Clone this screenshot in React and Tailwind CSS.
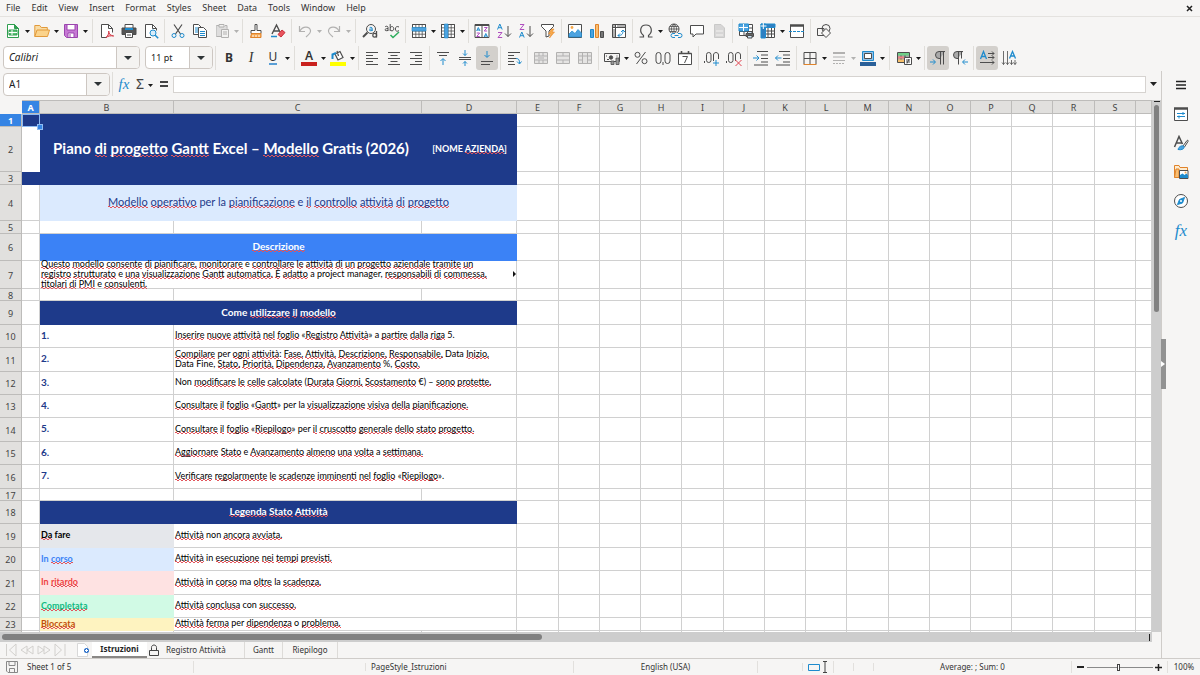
import React from "react";

const G = "#4d4d4d";
const B = "#1e8bcd";

function Svg({ children, w = 16, vb = "0 0 16 16", faded }) {
  return (
    <svg
      width={w}
      height="16"
      viewBox={vb}
      fill="none"
      stroke={G}
      strokeWidth="1"
      className={faded ? "opacity-40" : ""}
      aria-hidden="true"
    >
      {children}
    </svg>
  );
}

const grid = "M1.5 1.5h13v13h-13zM1.5 4.8h13M1.5 8h13M1.5 11.2h13M4.8 1.5v13M8 1.5v13M11.2 1.5v13";

const icons = {
  new: (
    <Svg>
      <path d="M2.5 1.5h7l4 4v9h-11z" stroke="#2f9e4f" fill="#fff" />
      <path d="M9.5 1.5v4h4z" fill="#2f9e4f" stroke="#2f9e4f" />
      <path d="M4 7h8v5H4z" fill="#5bbf74" stroke="#2f9e4f" />
      <path d="M4 9.5h8M7 7v5" stroke="#fff" />
    </Svg>
  ),
  open: (
    <Svg>
      <path d="M.8 13.5V2.5h5l1.5 2h6v2.5" fill="#f9dca4" stroke="#e29a3b" />
      <path d="M.8 13.5 3 7h12.5l-2 6.5z" fill="#fbd38b" stroke="#e29a3b" />
    </Svg>
  ),
  save: (
    <Svg>
      <path d="M1.5 1.5h13v13h-11l-2-2z" fill="#c678d4" stroke="#9b45ae" />
      <path d="M4 1.5h8v5.5H4zM5 10h6v4.5H5z" fill="#fff" stroke="#9b45ae" />
      <path d="M7 11v3" stroke="#9b45ae" />
    </Svg>
  ),
  pdf: (
    <Svg>
      <path d="M8 14.500H2.500V1.500h7l4 4v4" fill="#fff" />
      <path d="M9.500 1.500v4h4" />
      <path d="M7 14.500c2-2 3-4 2.700-6.500 0 3 2 4.500 5 5-3-.5-5.500 0-7.700 1.500z" stroke="#d4404c" fill="#f4a3aa" />
    </Svg>
  ),
  print: (
    <Svg>
      <path d="M4 5V1.500h8V5" fill="#fff" />
      <path d="M1 5h14v6.500H1z" fill="#555" />
      <path d="M4 6h8" stroke={B} strokeWidth="2" />
      <path d="M4.500 9.500h7v5h-7z" fill="#fff" />
      <path d="M6 12h4" />
    </Svg>
  ),
  preview: (
    <Svg>
      <path d="M8 14.500H2.500V1.500h7l4 4v2" fill="#fff" />
      <path d="M9.500 1.500v4h4" />
      <circle cx="10" cy="10" r="3" fill="#d7ecfa" stroke={B} />
      <path d="m12.200 12.200 3 3" stroke={B} strokeWidth="1.500" />
    </Svg>
  ),
  cut: (
    <Svg>
      <path d="M4 1.500 10.500 11M12 1.500 5.500 11" strokeWidth="1.200" />
      <circle cx="4" cy="12.500" r="2" stroke={B} />
      <circle cx="12" cy="12.500" r="2" stroke={B} />
    </Svg>
  ),
  copy: (
    <Svg>
      <path d="M1.500 1.500h5l2.500 2.500v7.500H1.500z" fill="#fff" />
      <path d="M3 5h3.500M3 7h3.500M3 9h3" stroke={B} />
      <path d="M6.500 4.500h5L14.500 7.500v7h-8z" fill="#fff" />
      <path d="M8 8.500h5M8 10.500h5M8 12.500h5" stroke={B} />
    </Svg>
  ),
  paste: (
    <Svg faded>
      <path d="M5 2.500H2.500v11H7M11 2.500h2V6" fill="#ccc" />
      <path d="M2.500 3H12v10H2.500z" fill="#bbb" stroke="none" />
      <path d="M5 1.500h5v2.500H5zM7.500 6.500h7v8h-7z" fill="#eee" />
      <path d="M9 9h4M9 11h4" />
    </Svg>
  ),
  brush: (
    <Svg>
      <path d="M7 1.500h2v6h4v3H3v-3h4z" fill="#fff" />
      <path d="M3.500 10.500h9.500v4H2.500z" fill="#f5a956" stroke="#e0832a" />
      <path d="M5 14v-2M8 14v-2M11 14v-2" stroke="#fff" />
    </Svg>
  ),
  clear: (
    <Svg>
      <path d="M2 11 6.500 2 10 9M3.500 8h6" strokeWidth="1.400" />
      <path d="M1 13.500h6" stroke={B} strokeWidth="1.500" />
      <path d="m8 11.500 4-4.500 3 2.500-4 4.500z" fill="#e9545d" stroke="#c9303b" />
    </Svg>
  ),
  undo: (
    <Svg faded>
      <path d="M2.500 3v5.500H8M3 8C5.500 3 12.500 3 13.500 7.500c.5 2.500-2 4.500-4.500 6.500" strokeWidth="1.200" />
    </Svg>
  ),
  redo: (
    <Svg faded>
      <path d="M13.500 3v5.500H8M13 8C10.500 3 3.500 3 2.500 7.500 2 10 4.500 12 7 14" strokeWidth="1.200" />
    </Svg>
  ),
  find: (
    <Svg>
      <circle cx="9" cy="6" r="4.500" />
      <path d="M5.500 9.500 1 14" strokeWidth="2" />
      <path d="M7.500 5c.5-1 2.700-1 2.700.5V8M10.200 6c-3.700-.3-3.700 2.500 0 1.500" stroke={B} />
      <path d="M14.500 8v6.500" strokeWidth="1.300" />
      <circle cx="12.700" cy="12.300" r="1.900" strokeWidth="1.200" />
    </Svg>
  ),
  spell: (
    <Svg>
      <path d="M1 4c.5-1 3-1.200 3 .4V8M4 5.500c-4 0-4 3 0 2M6.200 1v7M6.200 5c1-2.500 4-1.500 3.500 1.200-.3 2-2.700 2.300-3.500.6M15 4c-1.500-1-3.700-.3-3.700 2S13.500 8.800 15 7.600" />
      <path d="m6.500 12 2.500 2.500L15 9" stroke="#2fae5e" strokeWidth="1.500" />
    </Svg>
  ),
  row: (
    <Svg>
      <path d="M1.500 1.500h13v13h-13z" fill="#fff" />
      <path d={grid} strokeWidth=".8" />
      <path d="M1 4.500h14v3.500H1z" fill="#4da3e0" stroke={B} strokeWidth=".6" />
    </Svg>
  ),
  col: (
    <Svg>
      <path d="M1.500 1.500h13v13h-13z" fill="#fff" />
      <path d={grid} strokeWidth=".8" />
      <path d="M4.500 1h3.500v14H4.500z" fill="#4da3e0" stroke={B} strokeWidth=".6" />
    </Svg>
  ),
  sort: (
    <Svg>
      <path d="M1 1.500h14v13H1zM8 3v11.500" fill="#fff" />
      <path d="M1 2h14" strokeWidth="2" />
      <path d="m2.700 8 1.600-3.500L6 8M3.200 7h2.200M10.200 14l1.600-3.500 1.700 3.500M10.700 13h2.200" stroke={B} />
      <path d="M2.700 10h3l-3 3.500h3M10.200 4.500h3l-3 3.500h3" stroke="#b04fc0" />
    </Svg>
  ),
  az: (
    <Svg>
      <path d="M1.500 6.500 3.800 1l2.400 5.500M2.300 4.700h3" stroke={B} />
      <path d="M2 9.500h4l-4 5h4.200" stroke="#b04fc0" />
      <path d="M12 3v10.500M9 10.500l3 3 3-3" />
    </Svg>
  ),
  za: (
    <Svg>
      <path d="M2 1.500h4l-4 5h4.200" stroke="#b04fc0" />
      <path d="M1.500 14.500 3.800 9l2.400 5.500M2.300 12.700h3" stroke={B} />
      <path d="M12 3v10.500M9 10.500l3 3 3-3" />
    </Svg>
  ),
  filter: (
    <Svg>
      <path d="M1.500 1.500h12v2L9 8v5l-3 1V8L1.500 3.500z" fill="#fff" />
      <path d="M11.500 6 8.500 11h2.500l-1.500 4L14.500 9h-2.500l2-3z" fill="#f7a94b" stroke="#e8892b" strokeWidth=".6" />
    </Svg>
  ),
  image: (
    <Svg>
      <path d="M1.500 1.500h13v13h-13z" fill="#fff" />
      <path d="m2 14 0-3 3-3 3 2.500L11 6.500l3.500 3.500v4z" fill="#4da3e0" stroke={B} strokeWidth=".7" />
      <circle cx="5" cy="4.500" r="1.400" fill="#f7a94b" stroke="none" />
    </Svg>
  ),
  chart: (
    <Svg>
      <path d="M1.500 6.500h3v8h-3z" fill="#4da3e0" stroke={B} />
      <path d="M6.500 1.500h3v13h-3z" fill="#f9bf74" stroke="#e0832a" />
      <path d="M11.500 8.500h3v6h-3z" fill="#777" />
    </Svg>
  ),
  pivot: (
    <Svg>
      <path d="M1.500 1.500h13v13h-13zM1.500 4.500h13M4.500 1.500v13" fill="#fff" />
      <path d="M2 3h2M6 3h8M3 6v8" strokeWidth="1.500" stroke="#999" />
      <path d="M7 12.500c4 0 5-1.500 5-5M9 10.500l-2 2 2 2M10 9l2-2 2 2" stroke={B} />
    </Svg>
  ),
  omega: (
    <Svg>
      <path d="M1.500 14h4v-1.500C1 9 2 2 8 2s7 7 2.500 10.500V14h4" strokeWidth="1.200" />
    </Svg>
  ),
  link: (
    <Svg>
      <circle cx="7" cy="6" r="5" />
      <path d="M2 6h10M7 1v10M3 3.500h8M3 8.500h6M7 1C3.500 4 3.500 8 7 11M7 1c3.500 3 3.500 7 0 10" strokeWidth=".8" />
      <path d="M3 10h13v5.500H3z" fill="#f6f5f4" stroke="none" />
      <path d="M8 14.500H6a2 2 0 0 1 0-4h2M11 10.500h2a2 2 0 0 1 0 4h-2M7.500 12.500h4" stroke={B} />
    </Svg>
  ),
  comment: (
    <Svg>
      <path d="M1.500 2.500h13v8.500H7l-3 3V11H1.500z" fill="#fff" />
    </Svg>
  ),
  header: (
    <Svg faded>
      <path d="M3.500 1.500h6.500l3.500 3.500v9.500h-10z" fill="#aaa" stroke="#888" />
      <path d="M5 8h7M5 12h7" stroke="#eee" />
    </Svg>
  ),
  area: (
    <Svg>
      <path d="M1.500 1.500h13v11h-13zM1.500 5h13M1.500 8.500h13M6 1.500v11M10 1.500v11" fill="#fff" />
      <path d="M1 1h9.500v7H1z" fill="#4da3e0" stroke={B} />
      <path d="M1 4.500h9M5.500 1v7" stroke="#fff" />
      <path d="M8 10.500h7.500v3H8z" fill="#666" />
      <path d="M9.500 8.500h4.500v2H9.500zM9.500 12.500h4.500v2.500H9.500z" fill="#cfe6f7" />
    </Svg>
  ),
  freeze: (
    <Svg>
      <path d="M1.500 1.500h13v13h-13zM1.500 8h13M1.500 11h13M8 1.500v13M11.500 1.500v13" fill="#fff" />
      <path d="M1 1h4.500v14H1zM1 1h14v3.500H1z" fill="#2f7fc1" stroke={B} />
      <path d="M3.300 0v6M.5 3h6" stroke="#fff" />
    </Svg>
  ),
  split: (
    <Svg>
      <path d="M1.500 2v12.500h13V2" fill="#fff" />
      <path d="M1 2.500h14" strokeWidth="2.500" />
      <path d="M0 8.500h16" stroke={B} strokeDasharray="3 1" />
    </Svg>
  ),
  shapes: (
    <Svg>
      <path d="M1.500 5.500h6.500v7H1.500z" fill="#f6f5f4" />
      <circle cx="10" cy="5.500" r="4" />
      <path d="m10 5.500 4.500 4.500L10 14.500 5.500 10z" fill="#f6f5f4" />
    </Svg>
  ),
  fill: (
    <Svg>
      <path d="m5 4 5-2.500 3 6-5 2.500zM7 1l1.500 5" fill="#fff" strokeWidth="1.200" />
      <path d="M2.500 9V4.500L6 3" stroke={B} strokeWidth="2" />
      <path d="M0 12h16v4H0z" fill="#ffff00" stroke="none" />
    </Svg>
  ),
  left: <Svg><path d="M2 2.500h12M2 5.500h7M2 8.500h12M2 11.500h7M2 14.500h12" /></Svg>,
  center: <Svg><path d="M2 2.500h12M4.500 5.500h7M2 8.500h12M4.500 11.500h7M2 14.500h12" /></Svg>,
  right: <Svg><path d="M2 2.500h12M7 5.500h7M2 8.500h12M7 11.500h7M2 14.500h12" /></Svg>,
  top: (
    <Svg>
      <path d="M2 2.500h12M4 5.500h8" />
      <path d="M8 15V9M5.500 11 8 8.500l2.500 2.500" stroke={B} />
    </Svg>
  ),
  middle: (
    <Svg>
      <path d="M2 7.500h12M2 9.500h12" />
      <path d="M8 0v5.500M6 3.500l2 2 2-2M8 16v-4.500M6 13.500l2-2 2 2" stroke={B} />
    </Svg>
  ),
  bottom: (
    <Svg>
      <path d="M2 11.500h12M2 14.500h9" />
      <path d="M8 1v6M5.500 5 8 7.500 10.500 5" stroke={B} />
    </Svg>
  ),
  wrap: (
    <Svg>
      <path d="M2 2.500h12M2 5.500h6M2 8.500h8M2 11.500h6M2 14.500h7" />
      <path d="M10 8.500c3 0 3.500 1.500 3.500 5M11 11.500l2.500 2.500 2-2.500" stroke={B} />
    </Svg>
  ),
  merge1: (
    <Svg faded>
      <path d="M1.500 2.500h13v11h-13zM1.500 6h13M1.500 10h13M6 2.500V6M10 2.500V6M6 10v3.500M10 10v3.500M5 8h6" fill="#ccc" />
    </Svg>
  ),
  merge2: (
    <Svg faded>
      <path d="M1.500 2.500h13v11h-13zM1.500 6h13M1.500 10h13M8 2.500V6M8 10v3.500" fill="#ccc" />
    </Svg>
  ),
  merge3: (
    <Svg faded>
      <path d="M1.500 2.500h13v11h-13zM1.500 6h13M5.500 2.500v11M10.500 2.500v11M1.500 10H5M11 10h3.500" fill="#ccc" />
    </Svg>
  ),
  currency: (
    <Svg>
      <path d="M.5 3.500h15v8H.5z" />
      <circle cx="7" cy="7.500" r="1.700" fill={G} />
      <path d="M2.500 5.500v1M13 5.500v1M3 9.500h2" />
      <path d="M7 11h3v3.500H7zM12 8h3v6.500h-3z" fill="#999" strokeWidth=".8" />
    </Svg>
  ),
  percent: (
    <Svg>
      <circle cx="4.500" cy="4.800" r="2.500" />
      <circle cx="11.500" cy="11.200" r="2.500" />
      <path d="M12.500 2 3.500 14" />
    </Svg>
  ),
  number: (
    <Svg>
      <rect x="1" y="2.500" width="5" height="11" rx="2.500" />
      <rect x="10" y="2.500" width="5" height="11" rx="2.500" />
      <path d="M8 12v3" />
    </Svg>
  ),
  date: (
    <Svg>
      <path d="M1.500 3.500h13v11h-13z" fill="#fff" />
      <path d="M1.500 3.500h13M4.500 1v3M11.500 1v3" strokeWidth="1.600" />
      <path d="M5.500 6.500h5l-3 6.500" />
    </Svg>
  ),
  addDec: (
    <Svg>
      <rect x="2.500" y="2.500" width="4.500" height="10" rx="2.200" />
      <path d="M9.500 11V5c0-3.300 5-3.300 5 0v4M.5 11v2" />
      <path d="M12 10v6M9 13h6" stroke={B} />
    </Svg>
  ),
  delDec: (
    <Svg>
      <rect x="2.500" y="2.500" width="4.500" height="10" rx="2.200" />
      <path d="M9.500 11V5c0-3.300 5-3.300 5 0v4M.5 11v2" />
      <path d="m9.500 10 6 6M15.500 10l-6 6" stroke="#e0434f" />
    </Svg>
  ),
  indent: (
    <Svg>
      <path d="M4 1.500h11M8 5h7M8 8.500h7M8 12h7M1 15h14" />
      <path d="M0 8h6M3.500 5.500 6 8l-2.500 2.500" stroke={B} />
    </Svg>
  ),
  outdent: (
    <Svg>
      <path d="M4 1.500h11M8 5h7M8 8.500h7M8 12h7M1 15h14" />
      <path d="M.5 8h6M3 5.500.5 8 3 10.500" stroke={B} />
    </Svg>
  ),
  borders: (
    <Svg>
      <path d="M2 14V2.500h12V14M8 2.500V14M2 8.500h12" />
      <path d="M1.500 14.500h13" stroke="#e0832a" />
    </Svg>
  ),
  lines: (
    <Svg faded>
      <path d="M2 3h12" strokeWidth="2" />
      <path d="M2 7h12M2 10.500h12" />
      <path d="M2 13.500h12" strokeDasharray="2 1" />
    </Svg>
  ),
  bcolor: (
    <Svg>
      <path d="M2.500 1.500h11v9h-11z" fill="#8fc0ea" stroke={B} />
      <path d="M4.500 3.500h7v5h-7z" fill="#fff" />
      <path d="M0 12h16v4H0z" fill="#2a6099" stroke="none" />
    </Svg>
  ),
  cond: (
    <Svg>
      <path d="M1.500 2.500h12v10h-12zM5 2.500v10M9 2.500v10M1.500 6h12M1.500 9h12" fill="#fff" />
      <path d="M2 3h11v2.500H2z" fill="#6fcf87" stroke="none" />
      <path d="M2 6.500h6V8.500H2z" fill="#f08080" stroke="none" />
      <path d="M2 9.500h6V12H2z" fill="#f7c06b" stroke="none" />
      <path d="M8.500 7.500h7v7h-7z" fill="#fff" />
      <path d="M10 10h4M10 12h4M13 9l-2 4.500" />
    </Svg>
  ),
  ltr: (
    <Svg>
      <path d="M15 1.500H9a3.500 3.500 0 0 0 0 7h1" fill="#aaa" />
      <path d="M10.500 1.500v13M13.500 1.500v13" />
      <path d="M0 12h5M3 9.500 5.500 12 3 14.500" stroke={B} />
    </Svg>
  ),
  rtl: (
    <Svg>
      <path d="M11 1.500H5a3.500 3.500 0 0 0 0 7h1" fill="#aaa" />
      <path d="M6.500 1.500v13M9.500 1.500v7" />
      <path d="M16 12h-5M13 9.500 10.500 12l2.500 2.500" stroke={B} />
    </Svg>
  ),
  tdlr: (
    <Svg>
      <path d="M1.500 9 4.500 1.500 7.500 9M2.500 6.500h4" stroke={B} strokeWidth="1.300" />
      <path d="M9 3.500h6M9 7.500h6M1 12.500h14M13 1.500l2 2-2 2M13 5.500l2 2-2 2M13 10.500l2 2-2 2" />
    </Svg>
  ),
  tdtb: (
    <Svg>
      <path d="M8.500 8.500 11.500 1.500l3 7M9.500 6h4" stroke={B} strokeWidth="1.300" />
      <path d="M2.500 1v13.500M6.500 1v13.500M10.500 10v4.500M14 10v4.500M1 12.500l1.500 2 1.500-2M5 12.500l1.500 2 1.500-2M9 12.500l1.500 2 1.500-2M12.500 12.500l1.500 2 1.500-2" strokeWidth=".8" />
    </Svg>
  ),
  menu: <Svg><path d="M3 4.500h10M3 8h10M3 11.500h10" stroke="#222" strokeWidth="1.500" /></Svg>,
  props: (
    <Svg>
      <path d="M1.500 2v12.500h13V2" fill="#fff" />
      <path d="M1 2.500h14" strokeWidth="2.500" />
      <path d="M4 7.500h8M4 10.500h8M10 6v3M6 9.500v3" stroke={B} />
    </Svg>
  ),
  styles: (
    <Svg>
      <path d="M1.500 12 6 1.500 9.500 9M3 8h6" strokeWidth="1.500" />
      <path d="m10 11 4-5.500c1-.5 1.500 0 1 1L11.500 12" />
      <path d="M5 14.500c1-3.500 4-4 5.500-3.500 2 2-1 4.500-5.500 3.500z" fill="#4da3e0" stroke={B} />
    </Svg>
  ),
  gallery: (
    <Svg>
      <path d="M1.500 13.500v-12h4.500l1 2h7.500v3" fill="#fdebcf" stroke="#e0832a" />
      <path d="M1.500 13.500 3 5h3v8.500z" fill="#f9bf74" stroke="#e0832a" />
      <path d="M6.500 6.500h8.500v8H6.500z" fill="#fff" />
      <path d="m7 14 0-3 2.500-1.500 2 1.500 2-1.500 1.500 2v2.500z" fill={B} stroke="none" />
      <circle cx="12.500" cy="8.500" r="1" fill="#f7a94b" stroke="none" />
    </Svg>
  ),
  navigator: (
    <Svg>
      <circle cx="8" cy="8" r="6.500" fill="#fff" />
      <path d="m11.500 4.500-2 5.500-5 1.500 2-5z" fill={B} stroke={B} />
      <circle cx="8" cy="8" r="1" fill="#fff" stroke="none" />
    </Svg>
  ),
};

function Caret({ faded }) {
  return (
    <svg width="5" height="3" viewBox="0 0 5 3" className={faded ? "opacity-30" : ""} aria-hidden="true">
      <path d="M0 0h5L2.500 3z" fill="#1a1a1a" />
    </svg>
  );
}

function Tool({ name, label, pressed, children }) {
  return (
    <button
      type="button"
      aria-label={label || name}
      aria-pressed={pressed}
      className={
        "flex h-6 w-[22px] shrink-0 items-center justify-center rounded-[3px] " +
        (pressed ? "bg-[#d3d0cc]" : "")
      }
    >
      {children || icons[name]}
    </button>
  );
}

function Drop({ label, faded }) {
  return (
    <button type="button" aria-label={label + " options"} className="flex h-6 w-[7px] shrink-0 items-center justify-center pt-0.5">
      <Caret faded={faded} />
    </button>
  );
}

function Sep({ wide }) {
  return (
    <div className={"flex h-6 shrink-0 justify-center " + (wide ? "w-[7px]" : "w-[5px]")}>
      <div className="h-full w-px bg-[#e0deda]" />
    </div>
  );
}

/* "name+" adds a drop-down arrow, "name*" marks a pressed toggle, "name-" adds a faded arrow */
function Tools({ items }) {
  return items.map((item, i) => {
    if (item === "|") return <Sep key={i} />;
    if (item === "||") return <Sep key={i} wide />;
    const name = item.replace(/[+*-]/, "");
    return (
      <React.Fragment key={i}>
        <Tool name={name} pressed={item.endsWith("*") || undefined} />
        {item.endsWith("+") && <Drop label={name} />}
        {item.endsWith("-") && <Drop label={name} faded />}
      </React.Fragment>
    );
  });
}

function Combo({ label, value, width, textClass }) {
  return (
    <div className={"flex h-[23px] shrink-0 overflow-hidden rounded-[4px] border border-[#cdc7c2] bg-white " + width}>
      <input aria-label={label} defaultValue={value} className={"min-w-0 flex-1 px-[5px] text-[#222] outline-none " + textClass} />
      <button type="button" aria-label={label + " list"} className="flex w-[23px] items-center justify-center border-l border-[#cdc7c2] bg-[#f4f3f1]">
        <svg width="8" height="4" viewBox="0 0 8 4" aria-hidden="true"><path d="M0 0h8L4 4z" fill="#2e3436" /></svg>
      </button>
    </div>
  );
}

/* Words inside braces are the ones the spell checker does not know. */
function Spell({ text }) {
  return text.split(/(\{[^}]*\})/).map((part, i) => {
    if (!part.startsWith("{")) return part;
    return part.slice(1, -1).split(" ").map((word, j) => (
      <React.Fragment key={i + "-" + j}>
        {j > 0 && " "}
        <span className="bg-[linear-gradient(90deg,#e2555c_50%,transparent_50%),linear-gradient(90deg,transparent_50%,#e2555c_50%)] bg-[size:4px_1px] bg-[position:0_calc(100%_-_1px),0_100%] bg-repeat-x">{word}</span>
      </React.Fragment>
    ));
  });
}

const columns = [
  ["A", "w-[18px]"], ["B", "w-[134px]"], ["C", "w-[248px]"], ["D", "w-[95px]"],
  ["E", "w-[42px]"], ["F", "w-[41px]"], ["G", "w-[41px]"], ["H", "w-[41px]"],
  ["I", "w-[42px]"], ["J", "w-[41px]"], ["K", "w-[41px]"], ["L", "w-[41px]"],
  ["M", "w-[42px]"], ["N", "w-[41px]"], ["O", "w-[41px]"], ["P", "w-[41px]"],
  ["Q", "w-[41px]"], ["R", "w-[42px]"], ["S", "w-[41px]"], ["", ""],
];

const line = "border-r border-b border-[#d0d0d0] ";
const navy = "bg-[#1e3a8a] text-white ";

const step = (h, n, text) => ({
  h,
  cells: [
    { c: line },
    { c: line + "pl-px text-[10px] font-bold text-[#1e3a8a]", t: n },
    { c: line + "pl-px", span: 2, t: text },
  ],
});
const state = (h, name, look, text) => ({
  h,
  cells: [
    { c: line },
    { c: "pl-px font-bold " + look, t: name },
    { c: line + "pl-px", span: 2, t: text },
  ],
});
const empty = (h) => ({ h, cells: [{ c: line }, { c: line }, { c: line }, { c: line }] });

const rows = [
  { h: "h-[13px]", cells: [{ c: "relative bg-[#1e3a8a]", selected: true }, { c: navy, span: 3 }] },
  {
    h: "h-[45px]",
    cells: [
      { c: "bg-white" },
      { c: navy + "text-center text-[15px] font-bold", span: 2, t: "Piano {di progetto Gantt} Excel – {Modello} Gratis (2026)" },
      { c: navy + "text-center text-[9px] font-bold", t: "[NOME {AZIENDA}]" },
    ],
  },
  { h: "h-[13px]", cells: [{ c: navy }, { c: navy, span: 3 }] },
  {
    h: "h-[36px]",
    cells: [
      { c: line },
      { c: "bg-[#dbeafe] text-center text-[11px] text-[#1e3a8a]", span: 3, t: "{Modello operativo} per la {pianificazione} e {il controllo attività di progetto}" },
    ],
  },
  empty("h-[13px]"),
  { h: "h-[27px]", cells: [{ c: line }, { c: "bg-[#3b82f6] text-center text-[10px] font-bold text-white", span: 3, t: "{Descrizione}" }] },
  {
    h: "h-[28px]",
    cells: [
      { c: line },
      {
        c: line + "relative pl-px",
        span: 3,
        spill: true,
        lines: [
          "{Questo modello consente di pianificare, monitorare} e {controllare le attività di un progetto aziendale tramite un}",
          "{registro strutturato} e {una visualizzazione Gantt automatica.} {È adatto} a project manager, {responsabili di commessa,}",
          "{titolari di PMI} e {consulenti.}",
        ],
      },
    ],
  },
  empty("h-[12px]"),
  { h: "h-[24px]", cells: [{ c: line }, { c: navy + "text-center text-[10px] font-bold", span: 3, t: "Come {utilizzare il modello}" }] },
  step("h-[23px]", "1.", "{Inserire nuove attività nel foglio} «{Registro Attività}» a {partire dalla riga} 5."),
  {
    h: "h-[24px]",
    cells: [
      { c: line },
      { c: line + "pl-px text-[10px] font-bold text-[#1e3a8a]", t: "2." },
      {
        c: line + "pl-px",
        span: 2,
        lines: [
          "{Compilare} per {ogni attività}: {Fase, Attività, Descrizione, Responsabile,} Data {Inizio,}",
          "Data Fine, {Stato, Priorità, Dipendenza, Avanzamento} %, {Costo.}",
        ],
      },
    ],
  },
  step("h-[23px]", "3.", "Non {modificare le celle calcolate} ({Durata Giorni, Scostamento} €) – {sono protette.}"),
  step("h-[23px]", "4.", "{Consultare il foglio} «{Gantt}» per la {visualizzazione visiva della pianificazione.}"),
  step("h-[24px]", "5.", "{Consultare il foglio} «{Riepilogo}» per {il cruscotto generale dello stato progetto.}"),
  step("h-[23px]", "6.", "{Aggiornare Stato} e {Avanzamento almeno una volta} a {settimana.}"),
  step("h-[24px]", "7.", "{Verificare regolarmente le scadenze imminenti nel foglio} «{Riepilogo}»."),
  empty("h-[12px]"),
  { h: "h-[23px]", cells: [{ c: line }, { c: navy + "text-center text-[10px] font-bold", span: 3, t: "{Legenda Stato Attività}" }] },
  state("h-[24px]", "{Da} fare", "bg-[#e5e7eb] text-black", "{Attività} non {ancora avviata.}"),
  state("h-[23px]", "In {corso}", "bg-[#dbeafe] text-[#3b82f6]", "{Attività} in {esecuzione nei tempi previsti.}"),
  state("h-[24px]", "In {ritardo}", "bg-[#fee2e2] text-[#ef4444]", "{Attività} in {corso} ma {oltre} la {scadenza.}"),
  state("h-[23px]", "{Completata}", "bg-[#d1fae5] text-[#10b981]", "{Attività conclusa} con {successo.}"),
  state("h-[13px]", "{Bloccata}", "bg-[#fef3c0] text-[#c2500a]", "{Attività ferma} per {dipendenza} o {problema.}"),
  empty("h-[13px]"),
];

function Cell({ cell }) {
  return (
    <td colSpan={cell.span} className={"p-0 whitespace-nowrap " + (cell.t ? "pb-[3px] " : "") + cell.c}>
      {cell.t && <Spell text={cell.t} />}
      {cell.lines && (
        <div className="-my-1 pb-px">
          {cell.lines.map((t) => (
            <div key={t} className="leading-[10px]"><Spell text={t} /></div>
          ))}
        </div>
      )}
      {cell.spill && (
        <svg width="4" height="6" viewBox="0 0 4 6" className="absolute top-[10px] -right-px" aria-hidden="true">
          <path d="M0 0v6l3-3z" fill="#111" />
        </svg>
      )}
      {cell.selected && (
        <>
          <div className="absolute inset-0 border border-[#8fbcf3]" />
          <div className="absolute -right-0.5 -bottom-0.5 z-10 h-1 w-1 bg-[#3584e4] outline outline-[#8fbcf3]" />
        </>
      )}
    </td>
  );
}

const headLine = "border-r border-b border-[#bdbcba] ";

function Sheet() {
  return (
    <div className="min-h-0 flex-1 overflow-hidden bg-white">
      <table className="w-full table-fixed border-separate border-spacing-0 font-[Lato,sans-serif] text-[9px] leading-none text-black">
        <colgroup>
          <col className="w-[22px]" />
          {columns.map(([name, width]) => <col key={name} className={width} />)}
        </colgroup>
        <thead className="font-['Noto_Sans',sans-serif] text-[9px] text-[#444]">
          <tr className="h-[14px]">
            <td className="bg-[#f6f5f4] p-0" />
            {columns.map(([name]) => (
              <th
                key={name}
                scope="col"
                className={"overflow-hidden border-t p-0 " + headLine + (name === "A" ? "bg-[#3584e4] font-bold text-white" : "bg-[#e1e0de] font-normal")}
              >
                {name}
              </th>
            ))}
          </tr>
        </thead>
        <tbody>
          {rows.map((row, i) => (
            <tr key={i} className={row.h}>
              <th
                scope="row"
                className={"p-0 pt-px text-center font-['Noto_Sans',sans-serif] text-[9px] " + headLine + (i === 0 ? "bg-[#3584e4] font-bold text-white" : "bg-[#e1e0de] font-normal text-[#444]")}
              >
                {i + 1}
              </th>
              {row.cells.map((cell, j) => <Cell key={j} cell={cell} />)}
              {columns.slice(4).map(([name]) => <td key={name} className={"p-0 " + line} />)}
            </tr>
          ))}
        </tbody>
      </table>
    </div>
  );
}

function SheetTabs() {
  return (
    <div className="flex h-4 shrink-0 items-center bg-[#f6f5f4] text-[8px] text-[#333]">
      <div className="flex w-[75px] shrink-0 pl-[5px]">
        <svg width="62" height="14" viewBox="0 0 62 14" fill="none" stroke="#d2d0cd" aria-hidden="true">
          <path d="M1.500 1v12M11 1 4.500 7l6.500 6zM22 3l-6 4 6 4zM28 3l-6 4 6 4zM33 3l6 4-6 4zM39 3l6 4-6 4zM50 1l6.500 6-6.500 6zM60 1v12" />
        </svg>
      </div>
      <button type="button" aria-label="Add sheet" className="flex h-full w-[17px] shrink-0 items-center justify-center">
        <svg width="13" height="14" viewBox="0 0 13 14" aria-hidden="true">
          <path d="M.5.5h7l3 3v10H.5z" fill="#fff" stroke="#d8d8d8" />
          <circle cx="9.500" cy="7.500" r="2.500" fill="#2a6fc9" />
          <path d="M9.500 6v3M8 7.500h3" stroke="#fff" />
        </svg>
      </button>
      <button type="button" className="h-full w-[55px] shrink-0 border-b-2 border-[#8a8886] bg-white font-bold text-[#222]">Istruzioni</button>
      <button type="button" className="flex h-full w-[98px] shrink-0 items-center gap-[7px] border-r border-[#dddbd8] pl-[2px]">
        <svg width="10" height="12" viewBox="0 0 10 12" fill="none" stroke="#444" aria-hidden="true">
          <path d="M.5 6.500h9v5h-9zM2.500 6.500v-3c0-3.300 5-3.300 5 0v3" />
        </svg>
        Registro Attività
      </button>
      <button type="button" className="h-full w-[38px] shrink-0 border-r border-[#dddbd8]">Gantt</button>
      <button type="button" className="h-full w-[55px] shrink-0 border-r border-[#dddbd8]">Riepilogo</button>
    </div>
  );
}

function StatusBar() {
  return (
    <footer className="flex h-[17px] shrink-0 items-center border-t border-[#cfccc9] bg-[#f6f5f4] text-[8px] text-[#333]">
      <div className="flex w-[194px] shrink-0 items-center gap-[9px] border-r border-[#e2e0dd] pl-[6px]">
        <svg width="12" height="12" viewBox="0 0 12 12" fill="none" stroke="#888" aria-hidden="true">
          <path d="M.5.500h11v11H2l-1.500-1.500zM3 .5h6v4H3zM3.500 7.500h5v4h-5z" />
        </svg>
        Sheet 1 of 5
      </div>
      <div className="w-[172px] shrink-0 border-r border-[#e2e0dd] py-1" />
      <div className="w-[208px] shrink-0 border-r border-[#e2e0dd] pl-[5px]">PageStyle_Istruzioni</div>
      <div className="flex-1 border-r border-[#e2e0dd] text-center">English (USA)</div>
      <div className="w-[45px] shrink-0 border-r border-[#e2e0dd] py-1" />
      <div className="flex w-[31px] shrink-0 items-center justify-center border-r border-[#e2e0dd]">
        <svg width="20" height="12" viewBox="0 0 20 12" fill="none" aria-hidden="true">
          <path d="M.5 3.500h11v6H.5z" stroke={B} />
          <path d="M15 .5h4M15 11.500h4M17 .5v11" stroke="#444" />
        </svg>
      </div>
      <div className="w-5 shrink-0 border-r border-[#e2e0dd] py-1" />
      <div className="w-5 shrink-0 border-r border-[#e2e0dd] py-1" />
      <div className="w-[198px] shrink-0 border-r border-[#e2e0dd] text-center">Average: ; Sum: 0</div>
      <div className="flex w-[96px] shrink-0 items-center justify-between border-r border-[#e2e0dd] px-[5px]">
        <button type="button" aria-label="Zoom out" className="flex h-3 w-[7px] items-center"><span className="h-[2px] w-full bg-[#222]" /></button>
        <input
          type="range"
          aria-label="Zoom"
          min="0"
          max="100"
          defaultValue="49"
          className="h-2 w-[66px] appearance-none bg-transparent [&::-webkit-slider-runnable-track]:h-px [&::-webkit-slider-runnable-track]:bg-[#8a8a8a] [&::-webkit-slider-thumb]:-mt-[3px] [&::-webkit-slider-thumb]:h-[7px] [&::-webkit-slider-thumb]:w-[3px] [&::-webkit-slider-thumb]:appearance-none [&::-webkit-slider-thumb]:border [&::-webkit-slider-thumb]:border-[#444] [&::-webkit-slider-thumb]:bg-white"
        />
        <button type="button" aria-label="Zoom in" className="flex h-3 w-[7px] items-center">
          <svg width="7" height="7" viewBox="0 0 7 7" stroke="#222" strokeWidth="1.500" aria-hidden="true"><path d="M0 3.500h7M3.500 0v7" /></svg>
        </button>
      </div>
      <div className="w-8 shrink-0 text-center">100%</div>
    </footer>
  );
}

export default function App() {
  return (
    <div className="flex h-screen w-full flex-col overflow-hidden bg-[#f6f5f4] font-['Noto_Sans',sans-serif]">
      <nav className="flex h-[17px] shrink-0 items-center gap-[11px] border-b border-[#e4e2df] pr-[7px] pl-[6px] text-[9px] text-[#333]">
        {["File", "Edit", "View", "Insert", "Format", "Styles", "Sheet", "Data", "Tools", "Window", "Help"].map((m) => (
          <button key={m} type="button">{m}</button>
        ))}
        <button type="button" aria-label="Close document" className="ml-auto">
          <svg width="7" height="7" viewBox="0 0 7 7" stroke="#222" strokeWidth="1.500" aria-hidden="true"><path d="m1 1 5 5M6 1 1 6" /></svg>
        </button>
      </nav>

      <div className="flex h-[27px] shrink-0 items-center pl-[2px]">
        <Tools items={["new+", "open+", "save+", "||", "pdf", "print", "preview", "|", "cut", "copy", "paste-", "|", "brush", "clear", "|", "undo-", "redo-", "||", "find", "spell", "|", "row+", "col+", "|", "sort", "az", "za", "filter", "|", "image", "chart", "pivot", "|", "omega+", "link", "comment", "header", "|", "area", "freeze+", "split", "|", "shapes"]} />
      </div>

      <div className="flex h-[27px] shrink-0 items-center pl-[3px]">
        <Combo label="Font name" value="Calibri" width="w-[137px] mr-[5px]" textClass="text-[10px] italic" />
        <Combo label="Font size" value="11 pt" width="w-[68px]" textClass="text-[9px]" />
        <Sep />
        <Tool label="Bold"><span className="text-[12px] font-bold text-[#333]">B</span></Tool>
        <Tool label="Italic"><span className="font-['Liberation_Serif',serif] text-[14px] text-[#333] italic">I</span></Tool>
        <Tool label="Underline"><span className="border-b-2 border-[#5a9fd6] text-[12px] leading-[12px] text-[#333]">U</span></Tool>
        <Drop label="Underline" />
        <Sep wide />
        <Tool label="Font color">
          <span className="flex w-4 flex-col items-center">
            <span className="text-[12px] leading-[12px] font-semibold text-[#333]">A</span>
            <span className="h-1 w-full bg-[#c9211e]" />
          </span>
        </Tool>
        <Drop label="Font color" />
        <Tools items={["fill+", "|", "left", "center", "right", "|", "top", "middle", "bottom*", "|", "wrap", "|", "merge1", "merge2", "merge3", "|", "currency+", "percent", "number", "date", "|", "addDec", "delDec", "|", "indent", "outdent", "|", "borders+", "lines-", "bcolor+", "||", "cond+", "|", "ltr*", "rtl", "|", "tdlr*", "tdtb"]} />
      </div>

      <div className="flex min-h-0 flex-1">
        <main className="flex min-w-0 flex-1 flex-col">
          <div className="flex h-[29px] shrink-0 items-center pb-[3px] pl-[3px]">
            <Combo label="Name Box" value="A1" width="w-[107px]" textClass="text-[10px]" />
            <Sep />
            <button type="button" aria-label="Function Wizard" className="w-[18px] font-['Liberation_Serif',serif] text-[15px] leading-none text-[#1e8bcd] italic">fx</button>
            <button type="button" aria-label="Select Function" className="w-[14px] text-[14px] leading-none text-[#444]">Σ</button>
            <Drop label="Select Function" />
            <button type="button" aria-label="Formula" className="flex w-[19px] flex-col items-center gap-[2px]">
              <span className="h-[2px] w-2 bg-[#444]" />
              <span className="h-[2px] w-2 bg-[#444]" />
            </button>
            <input aria-label="Input line" className="h-[17px] min-w-0 flex-1 border border-[#d6d3d0] bg-white px-1 text-[9px] outline-none" />
            <button type="button" aria-label="Expand Formula Bar" className="flex w-[15px] items-center justify-center">
              <svg width="7" height="4" viewBox="0 0 7 4" aria-hidden="true"><path d="M0 0h7L3.500 4z" fill="#222" /></svg>
            </button>
          </div>

          <div className="flex min-h-0 flex-1">
            <div className="flex min-w-0 flex-1 flex-col">
              <Sheet />
              <div className="flex h-[10px] shrink-0 items-center justify-between bg-[#cdcdcd] px-[2px]">
                <div className="h-[6px] w-[47%] rounded-full bg-[#808080]" />
                <div className="h-[7px] w-px bg-[#222]" />
              </div>
            </div>
            <div className="mb-[10px] flex w-[9px] shrink-0 flex-col items-center bg-[#cdcdcd] pt-px">
              <div className="h-px w-[6px] bg-[#222]" />
              <div className="mt-[3px] h-[39%] w-[5px] rounded-full bg-[#808080]" />
            </div>
          </div>
          <SheetTabs />
        </main>

        <aside className="relative flex w-[39px] shrink-0 flex-col items-center gap-[13px] border-l border-[#cfccc9] pt-[6px]">
          {["menu", "props", "styles", "gallery", "navigator"].map((name) => (
            <button key={name} type="button" aria-label={name} className="flex h-4 w-4 items-center justify-center">{icons[name]}</button>
          ))}
          <button type="button" aria-label="Functions" className="h-4 font-['Liberation_Serif',serif] text-[17px] leading-none text-[#1e8bcd] italic">fx</button>
          <button type="button" aria-label="Hide sidebar" className="absolute top-[268px] -left-px flex h-[50px] w-[5px] items-center bg-[#929292]">
            <svg width="4" height="6" viewBox="0 0 4 6" aria-hidden="true"><path d="M0 0v6l4-3z" fill="#fff" /></svg>
          </button>
        </aside>
      </div>
      <StatusBar />
    </div>
  );
}
